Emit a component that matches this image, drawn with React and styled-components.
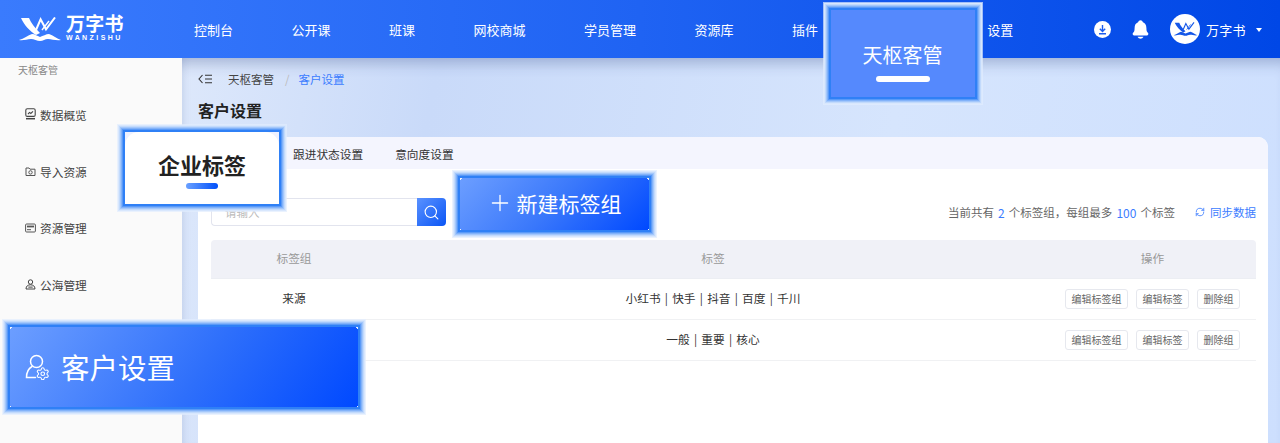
import React from 'react';
import styled, { createGlobalStyle } from 'styled-components';
import { Search, RefreshCw, Plus, Settings } from 'lucide-react';
import { IoNotifications } from 'react-icons/io5';

const Global = createGlobalStyle`
  html, body { margin: 0; padding: 0; height: 443px; overflow: hidden; }
  body { font-family: "Noto Sans CJK SC", "Noto Sans", sans-serif; color: #333; background: #fafafa; }
  * { box-sizing: border-box; }
`;

const Page = styled.div`position: relative; width: 1280px; height: 443px; overflow: hidden; display: flex; flex-direction: column;`;
const Header = styled.header`
  height: 58px; flex: none; display: flex; align-items: center; color: #fff; position: relative; z-index: 2;
  background: linear-gradient(90deg, #3a7bfd 0%, #1f63f3 50%, #0047e6 100%);
`;
const Logo = styled.div`width: 194px; flex: none; padding-left: 18px; display: flex; align-items: center; gap: 4px; padding-bottom: 1px;`;
const LogoText = styled.div`display: flex; flex-direction: column; line-height: 1;`;
const LogoCn = styled.span`font-size: 19px; font-weight: 700; line-height: 16px; letter-spacing: .3px;`;
const LogoEn = styled.span`font-family: "Liberation Sans", sans-serif; font-size: 7px; font-weight: 700; letter-spacing: 2.42px; line-height: 8px; margin-top: 3px; white-space: nowrap;`;
const Nav = styled.nav`display: flex; gap: 58.5px; font-size: 13px; flex: 1;`;
const NavItem = styled.span`white-space: nowrap;`;
const Tools = styled.div`display: flex; align-items: center; width: 186px; flex: none;`;
const Tool = styled.span`width: 38px; display: flex; height: 18px; align-items: center; color: #fff;`;
const BellWrap = styled(Tool)`margin-left: -2px; margin-right: 2px;`;
const Avatar = styled.span`width: 30px; height: 30px; border-radius: 50%; background: #fff; display: flex; align-items: center; justify-content: center; margin-right: 6px;`;
const UserName = styled.span`font-size: 13px; width: 50px; letter-spacing: .2px;`;
const Caret = styled.span`width: 0; height: 0; border: 3px solid transparent; border-top: 4px solid #fff; margin-top: 4px;`;

const Body = styled.div`flex: 1; display: flex; min-height: 0;`;
const Sidebar = styled.aside`width: 182px; flex: none; background: #fafafa;`;
const SideTitle = styled.div`font-size: 10px; color: #888; padding: 5px 0 0 18px; height: 28px; line-height: 14px;`;
const SideItem = styled.div`height: 56.7px; display: flex; align-items: center; gap: 4px; padding-left: 25px; font-size: 11.7px; color: #444; svg { flex: none; }`;

const Main = styled.main`
  flex: 1; min-width: 0; display: flex; flex-direction: column; padding: 0 12px 0 16px;
  background: linear-gradient(100deg, #dde8fb 0%, #c9daf9 22%, #d6e5fd 62%, #cddffe 100%);
  box-shadow: inset 0 15px 14px -10px rgba(50, 70, 130, .32), inset 8px 0 8px -7px rgba(50, 70, 130, .12);
`;
const Crumbs = styled.div`height: 42px; flex: none; display: flex; align-items: center; font-size: 11.5px; color: #444;`;
const CrumbBack = styled.span`display: flex; width: 30px;`;
const Sep = styled.span`color: #bbb; margin: 0 9px 0 11px;`;
const CrumbNow = styled.span`color: #3b7cff;`;
const Title = styled.h1`margin: 0 0 17px; height: 20px; line-height: 20px; font-size: 16px; font-weight: 700; color: #222; flex: none;`;
const Card = styled.section`flex: 1; min-height: 0; background: #fff; border-radius: 10px 10px 0 0; overflow: hidden;`;
const Tabs = styled.div`height: 32px; background: #f4f5fe; display: flex; align-items: center; font-size: 11.7px; color: #333; padding-left: 95px; gap: 32px;`;
const CardBody = styled.div`padding: 29px 12px 0 13px;`;
const Toolbar = styled.div`display: flex; align-items: center; justify-content: space-between; height: 28px; margin-bottom: 14px;`;
const SearchBox = styled.div`display: flex; width: 235px; height: 28px;`;
const Input = styled.div`flex: 1; border: 1px solid #e2e4ee; border-right: 0; border-radius: 4px 0 0 4px; font-size: 11.5px; color: #bbb; line-height: 26px; padding-left: 13px;`;
const SearchBtn = styled.button`width: 29px; border: 0; padding: 0; color: #fff; border-radius: 0 4px 4px 0; background: linear-gradient(135deg, #5a92ff, #0a55f5); display: flex; align-items: center; justify-content: center;`;
const Summary = styled.div`display: flex; align-items: center; font-size: 11.5px; color: #666;`;
const Num = styled.b`color: #3b7cff; font-weight: 400; font-size: 12px; padding: 0 1.5px;`;
const Sync = styled.span`color: #3b7cff; display: flex; align-items: center; gap: 5px; margin-left: 20px;`;
const Row = styled.div`
  display: grid; grid-template-columns: 166px 1fr 207px; align-items: center; text-align: center;
  height: ${p => p.$head ? 39 : 41}px; font-size: 11.7px; word-spacing: 1.6px;
  padding-bottom: ${p => p.$head ? 3 : 3}px;
  color: ${p => p.$head ? '#999' : '#333'}; background: ${p => p.$head ? '#f0f1f7' : '#fff'};
  border-bottom: 1px solid ${p => p.$head ? '#eceef3' : '#f0f1f3'};
  border-radius: ${p => p.$head ? '4px 4px 0 0' : '0'};
`;
const Actions = styled.div`display: flex; justify-content: center; gap: 8px; margin-top: 3px;`;
const ActionBtn = styled.button`
  height: 20px; padding: 0 5.5px; font: 10px/18px "Noto Sans CJK SC", sans-serif; color: #666; background: #fff;
  border: 1px solid #e6e8ee; border-radius: 3px; white-space: nowrap;
`;

const Callout = styled.div`
  position: absolute; display: flex; z-index: 5;
  box-shadow: 0 0 0 2px #2f80f6, 0 0 0 3px #5a9af7, 0 0 0 4px #82b2f9, 0 0 0 5px #a3c7fb, 0 0 0 6px #c2dafc, 0 0 0 7px #d8e7fd, 0 0 0 8px rgba(225, 236, 253, .7);
`;
const corners = `
  linear-gradient(135deg, rgba(255,255,255,.9) 1.8px, transparent 1.8px),
  linear-gradient(225deg, rgba(255,255,255,.9) 1.8px, transparent 1.8px),
  linear-gradient(45deg, rgba(255,255,255,.9) 1.4px, transparent 1.4px),
  linear-gradient(315deg, rgba(255,255,255,.9) 1.4px, transparent 1.4px)
`;
const TopCallout = styled(Callout)`
  left: 830.500px; top: 10px; width: 144px; height: 87px; background: #5589fd; color: #fdfeff;
  flex-direction: column; align-items: center; padding-top: 30px; font-size: 20px; line-height: 30px;
`;
const WhiteBar = styled.span`width: 54px; height: 6px; border-radius: 3px; background: #fff; margin-top: 6px;`;
const TagCallout = styled(Callout)`
  left: 125px; top: 132px; width: 154px; height: 72px; background: #eef1ff; color: #222;
  flex-direction: column; align-items: center; padding-top: 16px; font-size: 22px; font-weight: 700; line-height: 32px;
  &::before { content: ""; position: absolute; inset: 0; background: #fff; border-radius: 14px 14px 0 0; }
  > * { position: relative; }
`;
const TagLabel = styled.span`display: block;`;
const BlueBar = styled.span`width: 32px; height: 6px; border-radius: 3px; background: linear-gradient(90deg, #6aa0ff, #0050fa); margin-top: 3px;`;
const NewCallout = styled(Callout)`
  left: 460px; top: 178px; width: 189px; height: 52px; color: #fff;
  background: ${corners}, linear-gradient(135deg, #6c9eff 0%, #3a78fb 50%, #0049ff 100%);
  align-items: center; justify-content: center; gap: 4px; font-size: 21px; line-height: 52px; padding: 0 1px 3px 0;
`;
const CustomerCallout = styled(Callout)`
  left: 10px; top: 327px; width: 348px; height: 80px; color: #fff;
  background: ${corners}, linear-gradient(125deg, #6c9eff 0%, #2e6ffb 55%, #0049ff 100%);
  align-items: center; padding: 0 0 1px 15px; gap: 11px; font-size: 28.5px; line-height: 80px;
`;

const navItems = ['控制台', '公开课', '班课', '网校商城', '学员管理', '资源库', '插件', '天枢客管', '设置'];

const Mark = ({ w, h, c }) => (
  <svg width={w} height={h} viewBox="0 0 44 24" fill="none">
    <path d="M3 1h8c2 5 6 10 11 15l-4 2C12 14 6 8 3 1z" fill={c} />
    <path d="M18 13l4.600-10.700L28 12.300 37 .5" stroke={c} strokeWidth="2" />
    <path d="M24 13L31 4" stroke={c} strokeWidth="1.400" />
    <path d="M1 23C6 22 10 18 14 17c3 0 5 2 8 3 3-1 6-3 9-3 4 1 8 5 12 6-5 1-9-1-13-1-3 0-5 2-8 2s-6-2-9-2c-4 0-8 2-12 1z" fill={c} />
  </svg>
);

const Screen = () => (
  <svg width="11" height="12" viewBox="0 0 11 12" fill="none" stroke="#444" strokeWidth="1.100">
    <rect x=".8" y=".8" width="9.400" height="7.600" rx="1.500" />
    <path d="M3 6l1.600-1.600 1.200 1L8 3.300" /><path d="M1 10.700h9" strokeWidth="1.500" />
  </svg>
);
const Folder = () => (
  <svg width="11" height="11" viewBox="0 0 11 11" fill="none" stroke="#555" strokeWidth="1">
    <path d="M1 2h3l1 1.200h5v6.300H1z" /><circle cx="5.500" cy="6.400" r="1.700" />
  </svg>
);
const Tray = () => (
  <svg width="11" height="10" viewBox="0 0 11 10" fill="none" stroke="#555" strokeWidth="1">
    <rect x=".6" y="1" width="9.800" height="8" rx="1" /><path d="M2 3.500h7" strokeWidth="1.800" /><path d="M2 6.700h4" />
  </svg>
);
const People = () => (
  <svg width="11" height="11" viewBox="0 0 11 11" fill="none" stroke="#444" strokeWidth="1">
    <circle cx="5.500" cy="3" r="2.200" /><path d="M1 10c0-3 2-4.200 4.500-4.200S10 7 10 10zM3.300 8.100h4.400" />
  </svg>
);
const UserGear = () => (
  <svg width="25" height="26" viewBox="0 0 25 26" fill="none" stroke="#fff" strokeWidth="1.500">
    <circle cx="11.500" cy="7.500" r="6" />
    <path d="M7 12.500C3.500 14.500 1.500 18 1.500 23.500h9" strokeLinecap="round" />
    <Settings x="10.500" y="12.500" width="14.500" height="14.500" strokeWidth="1.800" />
  </svg>
);
const Breadcrumb = () => (
  <svg width="14" height="10" viewBox="0 0 14 10" fill="none" stroke="#333" strokeWidth="1.100">
    <path d="M4.500 1L1 5l3.500 4" /><path d="M7 1.200h7M7 5h7M7 8.800h7" />
  </svg>
);
const DownloadIcon = () => (
  <svg width="17" height="17" viewBox="0 0 17 17"><circle cx="8.500" cy="8.500" r="8.500" fill="#fff" />
    <path d="M8.500 4v6M5.800 7.800l2.700 2.700 2.700-2.700M5 12.800h7" fill="none" stroke="#1b5cee" strokeWidth="1.400" /></svg>
);

export default function App() {
  return (
    <Page>
      <Global />
      <Header>
        <Logo>
          <Mark w={44} h={24} c="#fff" />
          <LogoText><LogoCn>万字书</LogoCn><LogoEn>WANZISHU</LogoEn></LogoText>
        </Logo>
        <Nav>{navItems.map(n => <NavItem key={n}>{n}</NavItem>)}</Nav>
        <Tools>
          <Tool><DownloadIcon /></Tool>
          <BellWrap><IoNotifications size={21} /></BellWrap>
          <Avatar><Mark w={25} h={14} c="#1557e8" /></Avatar>
          <UserName>万字书</UserName>
          <Caret />
        </Tools>
      </Header>
      <Body>
        <Sidebar>
          <SideTitle>天枢客管</SideTitle>
          <SideItem><Screen />数据概览</SideItem>
          <SideItem><Folder />导入资源</SideItem>
          <SideItem><Tray />资源管理</SideItem>
          <SideItem><People />公海管理</SideItem>
        </Sidebar>
        <Main>
          <Crumbs>
            <CrumbBack><Breadcrumb /></CrumbBack>
            天枢客管<Sep>/</Sep><CrumbNow>客户设置</CrumbNow>
          </Crumbs>
          <Title>客户设置</Title>
          <Card>
            <Tabs><span>跟进状态设置</span><span>意向度设置</span></Tabs>
            <CardBody>
              <Toolbar>
                <SearchBox>
                  <Input>请输入</Input>
                  <SearchBtn><Search size={17} strokeWidth={1.6} /></SearchBtn>
                </SearchBox>
                <Summary>
                  当前共有&nbsp;<Num>2</Num>&nbsp;个标签组，每组最多&nbsp;<Num>100</Num>&nbsp;个标签
                  <Sync><RefreshCw size={10} />同步数据</Sync>
                </Summary>
              </Toolbar>
              <Row $head><span>标签组</span><span>标签</span><span>操作</span></Row>
              <Row>
                <span>来源</span><span>小红书 | 快手 | 抖音 | 百度 | 千川</span>
                <Actions><ActionBtn>编辑标签组</ActionBtn><ActionBtn>编辑标签</ActionBtn><ActionBtn>删除组</ActionBtn></Actions>
              </Row>
              <Row>
                <span></span><span>一般 | 重要 | 核心</span>
                <Actions><ActionBtn>编辑标签组</ActionBtn><ActionBtn>编辑标签</ActionBtn><ActionBtn>删除组</ActionBtn></Actions>
              </Row>
            </CardBody>
          </Card>
        </Main>
      </Body>
      <TopCallout>天枢客管<WhiteBar /></TopCallout>
      <TagCallout><TagLabel>企业标签</TagLabel><BlueBar /></TagCallout>
      <NewCallout><Plus size={26} strokeWidth={1.2} />新建标签组</NewCallout>
      <CustomerCallout><UserGear />客户设置</CustomerCallout>
    </Page>
  );
}
